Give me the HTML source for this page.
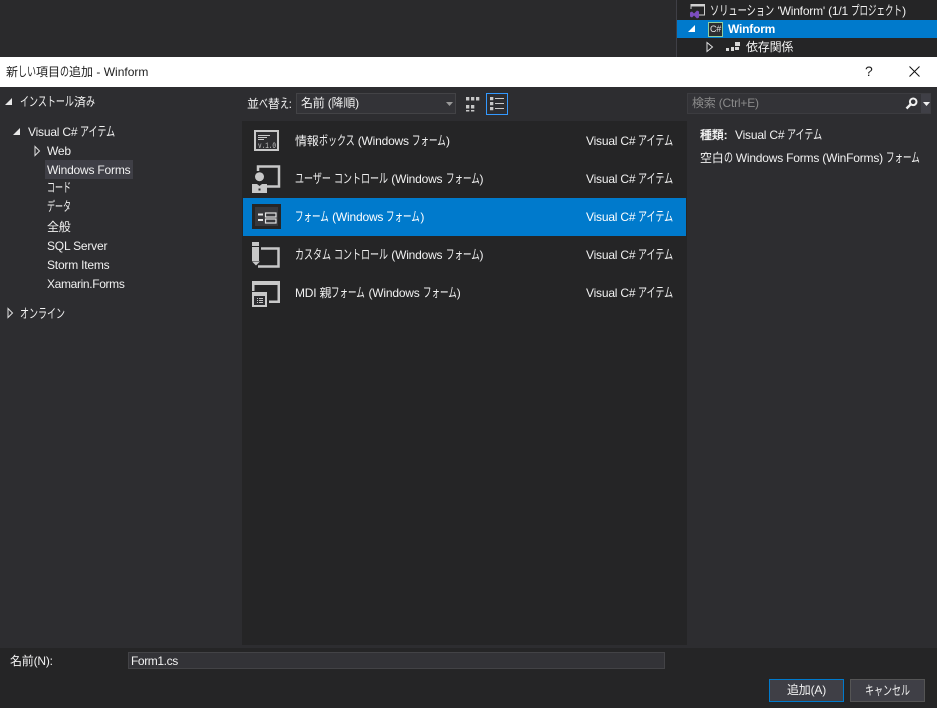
<!DOCTYPE html>
<html lang="ja">
<head>
<meta charset="utf-8">
<title>新しい項目の追加 - Winform</title>
<style>
html,body{margin:0;padding:0;background:#2d2d30;}
#r{position:relative;width:937px;height:708px;overflow:hidden;background:#2d2d30;font-family:"Liberation Sans","Noto Sans CJK JP",sans-serif;font-size:12px;color:#f1f1f1;letter-spacing:-.2px;}
.b{position:absolute;}
.t{position:absolute;white-space:nowrap;line-height:16px;height:16px;}
svg{position:absolute;overflow:visible;}
.k{font-style:normal;font-size:13px;display:inline-block;white-space:nowrap;letter-spacing:0;line-height:16px;height:16px;vertical-align:top;--a:9;width:calc(var(--n)*var(--a)*1px);transform:scaleX(calc(var(--a)/13));transform-origin:0 50%;}
.f{--a:8.5;}
.g{--a:8;}
.s{--a:9.2;}
</style>
</head>
<body>
<div id="r">
<!-- top -->
<div class="b" style="left:0;top:0;width:937px;height:57px;background:#2a2a2c"></div>
<div class="b" style="left:676px;top:0;width:261px;height:57px;background:#252526"></div>
<div class="b" style="left:676px;top:0;width:1px;height:57px;background:#3f3f46"></div>
<div class="b" style="left:677px;top:20px;width:260px;height:18px;background:#007acc"></div>
<svg style="left:689px;top:3px" width="18" height="16" viewBox="0 0 18 16"><path d="M2 6V1.500H15.500V12H10" fill="none" stroke="#d0d0d0" stroke-width="1"/><path d="M2 2h14v1.500H2z" fill="#d0d0d0"/><path d="M1 9.500l2-1 2 2 3-3 2 1v6l-2 1-3-3-2 2-2-1z" fill="#7c4dbf"/></svg>
<span class="t" style="left:710px;top:3px;color:#f1f1f1"><i class="k s" style="--n:7">ソリューション</i> 'Winform' (1/1 <i class="k f" style="--n:6">プロジェクト</i>)</span>
<svg style="left:688px;top:25px" width="8" height="8"><path d="M7 0V7H0z" fill="#fff"/></svg>
<div class="b" style="left:708px;top:22px;width:13px;height:13px;border:1px solid #8fce9f;background:#2d2d30;color:#e8e8e8;font-size:9px;line-height:13px;text-align:center">C#</div>
<span class="t" style="left:728px;top:21px;color:#fff;font-weight:bold">Winform</span>
<svg style="left:706px;top:42px" width="8" height="10"><path d="M1 0.500L6.500 5 1 9.500z" fill="none" stroke="#e0e0e0"/></svg>
<svg style="left:726px;top:42px" width="14" height="10"><path d="M0 6h3v3H0zM5 5h3v4H5zM9 0h5v4H9zM9 5h4v3H9z" fill="#d8d8d8"/></svg>
<span class="t" style="left:746px;top:39px;color:#f1f1f1">依存関係</span>

<!-- title -->
<div class="b" style="left:0;top:57px;width:937px;height:30px;background:#fff"></div>
<span class="t" style="left:6px;top:64px;color:#1e1e1e;letter-spacing:0">新<i class="k" style="--n:2">しい</i>項目<i class="k" style="--n:1">の</i>追加 - Winform</span>
<span class="t" style="left:865px;top:63px;color:#1e1e1e;font-size:14px">?</span>
<svg style="left:909px;top:66px" width="11" height="11"><path d="M0.500 0.500l10 10M10.500 0.500l-10 10" stroke="#111" fill="none"/></svg>

<!-- left tree -->
<svg style="left:5px;top:98px" width="8" height="8"><path d="M7 0V7H0z" fill="#e8e8e8"/></svg>
<span class="t" style="left:20px;top:94px"><i class="k" style="--n:6">インストール</i>済<i class="k" style="--n:1">み</i></span>
<svg style="left:13px;top:128px" width="8" height="8"><path d="M7 0V7H0z" fill="#e8e8e8"/></svg>
<span class="t" style="left:28px;top:124px">Visual C# <i class="k" style="--n:4">アイテム</i></span>
<svg style="left:34px;top:146px" width="7" height="10"><path d="M1 0.500L5.500 5 1 9.500z" fill="none" stroke="#e0e0e0"/></svg>
<span class="t" style="left:47px;top:143px">Web</span>
<div class="b" style="left:45px;top:160px;width:88px;height:19px;background:#3f3f46"></div>
<span class="t" style="left:47px;top:162px">Windows Forms</span>
<span class="t" style="left:47px;top:180px"><i class="k g" style="--n:3">コード</i></span>
<span class="t" style="left:47px;top:199px"><i class="k g" style="--n:3">データ</i></span>
<span class="t" style="left:47px;top:219px">全般</span>
<span class="t" style="left:47px;top:238px">SQL Server</span>
<span class="t" style="left:47px;top:257px">Storm Items</span>
<span class="t" style="left:47px;top:276px;letter-spacing:-.35px">Xamarin.Forms</span>
<svg style="left:7px;top:308px" width="7" height="10"><path d="M1 0.500L5.500 5 1 9.500z" fill="none" stroke="#e0e0e0"/></svg>
<span class="t" style="left:20px;top:306px"><i class="k" style="--n:5">オンライン</i></span>

<!-- toolbar -->
<span class="t" style="left:247px;top:96px">並<i class="k" style="--n:1">べ</i>替<i class="k" style="--n:1">え</i>:</span>
<div class="b" style="left:296px;top:93px;width:158px;height:19px;background:#333337;border:1px solid #434346"></div>
<span class="t" style="left:301px;top:95px">名前 (降順)</span>
<svg style="left:446px;top:102px" width="7" height="4"><path d="M0 0h7L3.500 4z" fill="#999"/></svg>
<svg style="left:466px;top:97px" width="14" height="15"><path d="M0 0h3.300v3.500H0zM5 0h3.300v3.500H5zM10 0h3.300v3.500H10zM0 8h3.300v3.500H0zM5 8h3.300v3.500H5zM0 13h3.300v1.500H0zM5 13h3.300v1.500H5z" fill="#c8c8c8"/></svg>
<div class="b" style="left:486px;top:93px;width:20px;height:20px;border:1px solid #3399ff"></div>
<svg style="left:490px;top:97px" width="14" height="14"><path d="M0 0h3.300v3.300H0zM0 5h3.300v3.300H0zM0 10h3.300v3.300H0z" fill="#c8c8c8"/><path d="M5 1.500h9M5 6.500h9M5 11.500h9" stroke="#c8c8c8" fill="none"/></svg>

<!-- search -->
<div class="b" style="left:687px;top:93px;width:242px;height:19px;background:#333337;border:1px solid #3c3c40"></div>
<div class="b" style="left:921px;top:94px;width:9px;height:19px;background:#3f3f46"></div>
<span class="t" style="left:692px;top:95px;color:#8a8a8a">検索 (Ctrl+E)</span>
<svg style="left:905px;top:97px" width="13" height="13"><circle cx="8.200" cy="4.800" r="3.300" fill="none" stroke="#f0f0f0" stroke-width="2"/><path d="M6 7L1.500 11.500" stroke="#f0f0f0" stroke-width="2.400" fill="none"/></svg>
<svg style="left:923px;top:102px" width="7" height="4"><path d="M0 0h7L3.500 4z" fill="#f0f0f0"/></svg>

<!-- list -->
<div class="b" style="left:242px;top:121px;width:445px;height:524px;background:#252526"></div>
<div class="b" style="left:243px;top:198px;width:443px;height:38px;background:#007acc"></div>

<svg style="left:254px;top:130px" width="25" height="21"><rect x="0" y="0" width="25" height="21" fill="#c8c8c8"/><rect x="2" y="2" width="21" height="17" fill="#2d2d30"/><path d="M4 5.500h12M4 7.500h9M4 9.500h6" stroke="#c8c8c8" fill="none"/><text x="4" y="18" font-family="Liberation Mono" font-size="8" textLength="18" lengthAdjust="spacingAndGlyphs" fill="#c8c8c8" letter-spacing="0">v.1.0</text></svg>
<span class="t" style="left:295px;top:133px">情報<i class="k" style="--n:4">ボックス</i> (Windows <i class="k f" style="--n:4">フォーム</i>)</span>
<span class="t" style="left:586px;top:133px">Visual C# <i class="k" style="--n:4">アイテム</i></span>

<svg style="left:252px;top:165px" width="29" height="29"><path d="M6 6V1.500H27V21.500H15" fill="none" stroke="#c8c8c8" stroke-width="2.500"/><circle cx="7.500" cy="11.700" r="4.500" fill="#c8c8c8"/><path d="M0 19h5l2.500 2 2.500-2h5v9H0z" fill="#c8c8c8"/><rect x="6.500" y="23.500" width="2" height="2" fill="#252526"/></svg>
<span class="t" style="left:295px;top:171px"><i class="k" style="--n:4">ユーザー</i> <i class="k" style="--n:6">コントロール</i> (Windows <i class="k f" style="--n:4">フォーム</i>)</span>
<span class="t" style="left:586px;top:171px">Visual C# <i class="k" style="--n:4">アイテム</i></span>

<svg style="left:252px;top:204px" width="29" height="25"><rect x="0" y="0" width="29" height="25" fill="#252526"/><rect x="3" y="3" width="23" height="19" fill="#38383c"/><path d="M6 9.500h5v2H6zM6 15h5v2H6z" fill="#e4e4e4"/><rect x="13.500" y="9" width="10.500" height="4" fill="none" stroke="#e4e4e4" stroke-width="1.200"/><rect x="13.500" y="15" width="10.500" height="4" fill="none" stroke="#e4e4e4" stroke-width="1.200"/></svg>
<span class="t" style="left:295px;top:209px;color:#fff"><i class="k f" style="--n:4">フォーム</i> (Windows <i class="k f" style="--n:4">フォーム</i>)</span>
<span class="t" style="left:586px;top:209px;color:#fff">Visual C# <i class="k" style="--n:4">アイテム</i></span>

<svg style="left:252px;top:242px" width="29" height="28"><rect x="0" y="0" width="7" height="4" fill="#c8c8c8"/><rect x="0" y="5" width="7" height="14" fill="#c8c8c8"/><path d="M0 19.500h8l-4 4z" fill="#c8c8c8"/><path d="M9 6.500H26.500V24.500H6" fill="none" stroke="#c8c8c8" stroke-width="2.500"/></svg>
<span class="t" style="left:295px;top:247px"><i class="k" style="--n:4">カスタム</i> <i class="k" style="--n:6">コントロール</i> (Windows <i class="k f" style="--n:4">フォーム</i>)</span>
<span class="t" style="left:586px;top:247px">Visual C# <i class="k" style="--n:4">アイテム</i></span>

<svg style="left:252px;top:281px" width="29" height="26"><path d="M0 0h28v22h-11v-2.500h8.500V4H2.500v6H0z" fill="#c8c8c8"/><rect x="0" y="11" width="15" height="15" fill="#c8c8c8"/><rect x="2" y="15" width="11" height="9" fill="#2d2d30"/><path d="M5 17.500h1M5 19.500h1M5 21.500h1M7 17.500h4M7 19.500h4M7 21.500h4" stroke="#c8c8c8" fill="none"/></svg>
<span class="t" style="left:295px;top:285px">MDI 親<i class="k f" style="--n:4">フォーム</i> (Windows <i class="k f" style="--n:4">フォーム</i>)</span>
<span class="t" style="left:586px;top:285px">Visual C# <i class="k" style="--n:4">アイテム</i></span>

<!-- details -->
<span class="t" style="left:700px;top:127px;font-weight:bold">種類:</span>
<span class="t" style="left:735px;top:127px">Visual C# <i class="k" style="--n:4">アイテム</i></span>
<span class="t" style="left:700px;top:150px">空白<i class="k" style="--n:1">の</i> Windows Forms (WinForms) <i class="k f" style="--n:4">フォーム</i></span>

<!-- bottom -->
<div class="b" style="left:0;top:648px;width:937px;height:60px;background:#252526"></div>
<span class="t" style="left:10px;top:653px">名前(N):</span>
<div class="b" style="left:128px;top:652px;width:535px;height:15px;background:#333337;border:1px solid #434346"></div>
<span class="t" style="left:131px;top:653px;letter-spacing:-.4px">Form1.cs</span>
<div class="b" style="left:769px;top:679px;width:73px;height:21px;background:#3f3f46;border:1px solid #007acc;text-align:center;line-height:21px">追加(A)</div>
<div class="b" style="left:850px;top:679px;width:73px;height:21px;background:#3f3f46;border:1px solid #555;text-align:center;line-height:21px"><i class="k" style="--n:5;line-height:21px;height:21px">キャンセル</i></div>
</div>
</body>
</html>
